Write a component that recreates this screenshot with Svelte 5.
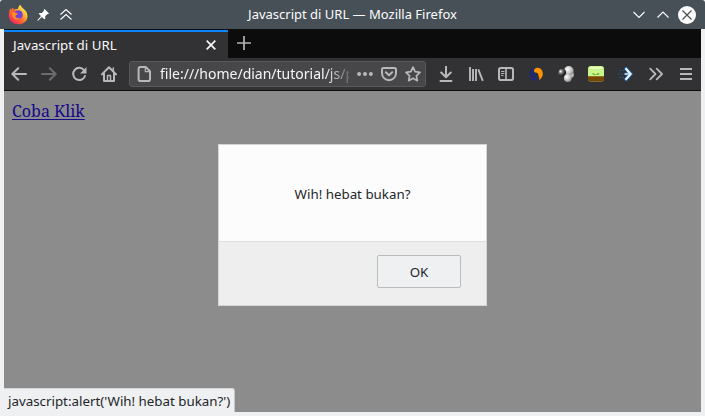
<script>
  const title = 'Javascript di URL';
  const message = 'Wih! hebat bukan?';
</script>

<div class="window">
  <header class="titlebar">
    <div class="left">
      <svg width="20" height="20" viewBox="0 0 20 20">
        <defs>
          <linearGradient id="fire" x1=".85" y1=".1" x2=".2" y2=".9">
            <stop offset="0" stop-color="#fff44f" /><stop offset=".35" stop-color="#ffb52e" />
            <stop offset=".65" stop-color="#ff642f" /><stop offset="1" stop-color="#f02a60" />
          </linearGradient>
        </defs>
        <path fill="url(#fire)" d="M2.2 3.200 3 5.100 5 2.500l.7 2.300C7.2 4 8.8 3.900 10 4.100 10.200 2.300 11 .7 12.400-.5c.4 2 1.500 2.800 3 4.200 2.400 1.900 4 4 4.100 7.200C19.500 16 15.500 19.300 10.300 19.300 4.800 19.300.8 15.500.8 10.500.8 8 1.400 5.500 2.200 3.200z" />
        <path fill="#ff5a32" d="M3 6.100 5 3l.7 2.300 3 .4-2.500 2.500-2 2z" />
        <circle cx="10.300" cy="9.800" r="4.500" fill="#7542d5" />
        <path fill="#ff8a20" d="M4 7.500c2-.8 3.200-.2 4 .5l2.200.6-1.800 1.500c-1 .7-1.300 1.500-.4 2.400 1.200 1.200 3.400.6 4.500.1-1 2-4 3-6.200 1.400C4.600 12.500 3.500 10 4 7.500z" />
      </svg>
      <svg class="pin" width="12" height="12" viewBox="0 0 12 12">
        <path fill="#fff" d="M7.500 0 12 4.400 11 5.300 10.400 5 8.200 7.200 8.300 9.500 7.300 10.300 4.800 7.900 1 11.700.3 11.200 4 7.100 1.700 4.700 2.500 3.900 4.800 4 7 1.800 6.700 1z" />
      </svg>
      <svg class="shade" width="12" height="12" viewBox="0 0 12 12" fill="none" stroke="#fff" stroke-width="1.100">
        <path d="M.5 5.500 6 .5 11.500 5.500M.5 10.500 6 5.500 11.500 10.500" />
      </svg>
    </div>
    <span class="caption">{title} — Mozilla Firefox</span>
    <div class="controls">
      <svg width="12" height="8" viewBox="0 0 12 8" fill="none" stroke="#fff" stroke-width="1.100"><path d="M.5 1 6 6.500 11.500 1" /></svg>
      <svg width="12" height="8" viewBox="0 0 12 8" fill="none" stroke="#fff" stroke-width="1.100"><path d="M.5 6.500 6 1 11.500 6.500" /></svg>
      <svg width="18" height="18" viewBox="0 0 18 18"><circle cx="9" cy="9" r="9" fill="#fcfcfc" /><path d="m4.500 4.500 9 9m0-9-9 9" stroke="#475057" stroke-width="1.200" /></svg>
    </div>
  </header>

  <main class="client">
    <div class="tabs">
      <div class="tab">
        <span>{title}</span>
        <svg width="10" height="10" viewBox="0 0 10 10" stroke="#f5f5f5" stroke-width="1.700"><path d="m.7.7 8.600 8.600m0-8.600L.7 9.300" /></svg>
      </div>
      <svg class="plus" width="14" height="14" viewBox="0 0 14 14" stroke="#b5b5b6" stroke-width="1.700"><path d="M7 0v14M0 7h14" /></svg>
    </div>

    <nav class="toolbar">
      <button aria-label="Back"><svg class="line" viewBox="0 0 16 16"><path d="M15 8H1.300M7.200 2.200 1.300 8l5.900 5.800" /></svg></button>
      <button aria-label="Forward"><svg class="line dim" viewBox="0 0 16 16"><path d="M1 8h13.700M8.800 2.200 14.700 8l-5.900 5.800" /></svg></button>
      <button aria-label="Reload"><svg class="line" viewBox="0 0 16 16"><path d="M13.300 4.500A6.100 6.100 0 1 0 14 10" /><path class="solid" d="M15.500 1v6.500H9z" /></svg></button>
      <button aria-label="Home"><svg class="line" viewBox="0 0 16 16"><path d="M.9 8.400 8 1.300l7.100 7.100M3 7.500v7.500h10V7.500" /><path d="M6.500 14V9.500h3V14" stroke-width="1.500" /><path d="M12.300 2v3.500" stroke-width="1.500" /></svg></button>

      <div class="url">
        <svg class="line page" viewBox="0 0 16 16"><path d="M4.500 1h5.200L14 5.300v7.900q0 1.800-1.800 1.800H4.500Q2.600 15 2.600 13.200V2.900Q2.600 1 4.500 1z" /><path d="M9.300 1.500v4.200h4.200" stroke-width="1.200" /></svg>
        <span class="address">file:///home/dian/tutorial/js/p</span>
        <svg class="line" viewBox="0 0 16 16"><g class="solid"><circle cx="2.100" cy="8" r="2" /><circle cx="8" cy="8" r="2" /><circle cx="13.900" cy="8" r="2" /></g></svg>
        <svg class="line" viewBox="0 0 16 16"><path d="M2.500 1.900h11q1.500 0 1.500 1.500v3.800a7 7 0 0 1-14 0V3.400q0-1.500 1.500-1.500zM4.800 6.200 8 9.300l3.200-3.100" /></svg>
        <svg class="line" viewBox="0 0 16 16"><path d="m8 1.200 2.100 4.500 4.900.7-3.600 3.400.9 4.900L8 12.300l-4.300 2.400.9-4.900L1 6.400l4.900-.7z" stroke-width="1.700" /></svg>
      </div>

      <button aria-label="Downloads"><svg class="line" viewBox="0 0 16 16"><path d="M8 .7v10.500M3.200 6.500 8 11.300l4.800-4.800M2.500 15h11" /></svg></button>
      <button aria-label="Library"><svg class="line" viewBox="0 0 16 16"><path d="M2 1v14M5 3v12M8 3v12M10.300 3.300l4.500 11.500" stroke-width="1.900" stroke-linecap="butt" /></svg></button>
      <button aria-label="Sidebar"><svg class="line" viewBox="0 0 16 16"><rect x="1" y="2" width="14" height="12" rx="1.800" /><path d="M8 2v12" stroke-width="1.600" /><path d="M3.500 5.500h2.500M3.500 7.500h2.500M3.500 9.500h1.500" stroke-width="1" /></svg></button>
      <button aria-label="Colour extension"><svg viewBox="0 0 16 16"><path fill="#202a64" d="M7 2.300C3 2 1 5 1.100 8.700c.1 4 2.900 6.100 6.500 6 1.500 0 2.600-.5 3-1L8.200 10 9 7.300 6.200 5z" /><path fill="#ff9500" d="M6.200 3.700C8 1.100 12 1.200 13.700 4c2.200 3.500 1 8.300-2.900 10.200 1-2 .4-3.300-.4-4.500.6-2.500-1.600-2.700-3.200-3.200-1-.5-1.500-1.700-1-2.800z" /></svg></button>
      <button aria-label="Spheres extension"><svg viewBox="0 0 16 16">
        <defs><radialGradient id="ball" cx=".38" cy=".35" r=".7"><stop offset="0" stop-color="#fff" /><stop offset=".5" stop-color="#ccc" /><stop offset="1" stop-color="#888" /></radialGradient><radialGradient id="dark" cx=".3" cy=".35" r=".65"><stop offset="0" stop-color="#fff" /><stop offset=".4" stop-color="#777" /><stop offset="1" stop-color="#111" /></radialGradient></defs>
        <circle cx="13" cy="9" r="3" fill="url(#ball)" /><circle cx="10.800" cy="4.900" r="4.900" fill="url(#ball)" /><circle cx="4.200" cy="6.600" r="3.800" fill="url(#dark)" /><circle cx="9.800" cy="12" r="3.900" fill="url(#ball)" /></svg></button>
      <button aria-label="Plant extension"><svg viewBox="0 0 16 16"><rect width="16" height="15.500" rx="2.700" fill="#caf58c" /><path fill="#774605" d="M0 10.300h16v2.800q0 2.400-2.600 2.400H2.600Q0 15.500 0 13.100z" /><path fill="#f5ffcb" d="M2 1h12v2H2z" opacity=".7" /><path d="M8 9.500c-.2-1.500-1.800-2-4-2.500.5 1.500 2 2.100 4 2 2 .1 3-.5 3.500-2-2 .2-3.200 1-3.500 2.500z" fill="#5aa010" /></svg></button>
      <button aria-label="Arrow extension"><svg viewBox="0 0 16 16"><path d="M1 4.500h5M0 8h6M1 11.500h5" stroke="#205b91" stroke-width="1.200" stroke-dasharray="2 1" opacity=".75" /><path d="M7 1.500 13 8l-6 6.500M7.500 8H12" fill="none" stroke="#2460a0" stroke-width="3.400" /><path d="M7.500 2.200 12.600 8l-5.100 5.800" fill="none" stroke="#e8f5ff" stroke-width="2.200" /><path d="M6.500 8H12" stroke="#cce4f6" stroke-width="1.600" /></svg></button>
      <button aria-label="More tools"><svg class="line" viewBox="0 0 16 16"><path d="m2.200 2.700 5.300 5.300-5.300 5.300M8.700 2.700 14 8l-5.300 5.300" stroke-width="1.800" /></svg></button>
      <button aria-label="Menu"><svg class="line" viewBox="0 0 16 16"><path d="M2 3h12M2 8h12M2 13h12" stroke-linecap="butt" /></svg></button>
    </nav>

    <section class="document">
      <a href="#top">Coba Klik</a>
      <div class="dialog" role="alertdialog" aria-label={message}>
        <p>{message}</p>
        <footer><button class="ok">OK</button></footer>
      </div>
      <div class="status">javascript:alert('{message}')</div>
    </section>
  </main>
</div>

<style>
  :global(body) { background: #eff0f1; overflow: hidden; }
  .window { width: 705px; height: 416px; box-sizing: border-box; background: #eff0f1; font: 13.33px/18px "Noto Sans", sans-serif; }
  svg { display: block; flex: none; }
  button { border: 0; padding: 0; background: none; font: inherit; }
  .titlebar { height: 29px; box-sizing: border-box; display: grid; grid-template-columns: 1fr auto 1fr; align-items: center; background: #475057; color: #fcfcfc; border-radius: 3px 3px 0 0; }
  .left { display: flex; align-items: center; padding-left: 8px; }
  .pin { margin-left: 9px; }
  .shade { margin-left: 11px; }
  .caption { font-size: 13px; line-height: 16px; padding-bottom: 1px; white-space: nowrap; }
  .controls { display: flex; justify-content: flex-end; align-items: center; gap: 12px; padding-right: 9px; }
  .controls svg:last-child { margin-left: -3px; }
  .client { margin: 0 4px; height: 383px; display: flex; flex-direction: column; }
  .tabs { height: 29px; box-sizing: border-box; padding-top: 1px; display: flex; background: #0c0c0d; }
  .tab { width: 224px; box-sizing: border-box; border-top: 2px solid #0a84ff; background: #323234; color: #f9f9fa; display: flex; justify-content: space-between; align-items: center; padding: 0 12px 0 9px; }
  .plus { margin: 6px 0 0 9px; }
  .toolbar { height: 33px; box-sizing: border-box; display: flex; align-items: center; background: #323234; border-bottom: 1px solid #0c0c0d; }
  .toolbar button { width: 30px; height: 28px; flex: none; display: flex; align-items: center; justify-content: center; }
  .toolbar svg { width: 16px; height: 16px; }
  .line { fill: none; stroke: #b8b8b9; stroke-width: 2; stroke-linecap: round; stroke-linejoin: round; }
  .dim { stroke: #6c6c6d; }
  .solid { fill: #b8b8b9; stroke: none; }
  .url { width: 297px; height: 26px; box-sizing: border-box; margin: 0 5px; padding: 0 4px 0 6px; display: flex; align-items: center; gap: 8px; background: #474749; border: 1px solid #59595b; border-radius: 3px; }
  .address { flex: 1; min-width: 0; overflow: hidden; white-space: nowrap; font-size: 14px; line-height: 22px; color: #f5f5f5; -webkit-mask-image: linear-gradient(to right, #000 165px, transparent 195px); mask-image: linear-gradient(to right, #000 165px, transparent 195px); }
  .document { position: relative; flex: 1; background: #8c8c8c; padding: 8px; box-sizing: border-box; }
  a { display: inline-block; font: 16px/24px "Noto Serif", "DejaVu Serif Condensed", "DejaVu Serif", serif; color: #14088b; text-decoration-thickness: 1px; text-underline-offset: 2px; }
  .dialog { position: absolute; left: 214px; top: 53px; width: 269px; height: 162px; box-sizing: border-box; display: flex; flex-direction: column; border: 1px solid #d5d5d5; background: #fcfcfc; color: #232629; }
  .dialog p { margin: 0; flex: 1; display: flex; align-items: center; justify-content: center; padding-top: 2px; }
  .dialog footer { height: 64px; box-sizing: border-box; border-top: 1px solid #dedede; background: #eee; padding: 13px 25px; display: flex; justify-content: flex-end; }
  .ok { width: 84px; height: 33px; border: 1px solid #b9bbbd !important; border-radius: 2px; background: #eff0f1; color: #232629; }
  .status { position: absolute; left: 0; bottom: 0; width: 231px; height: 24px; box-sizing: border-box; padding: 3px 0 0 4px; background: #eff0f1; border-top: 1px solid #d5d6d7; border-right: 1px solid #c5c6c7; border-radius: 0 3px 0 0; color: #232629; white-space: nowrap; }
</style>
